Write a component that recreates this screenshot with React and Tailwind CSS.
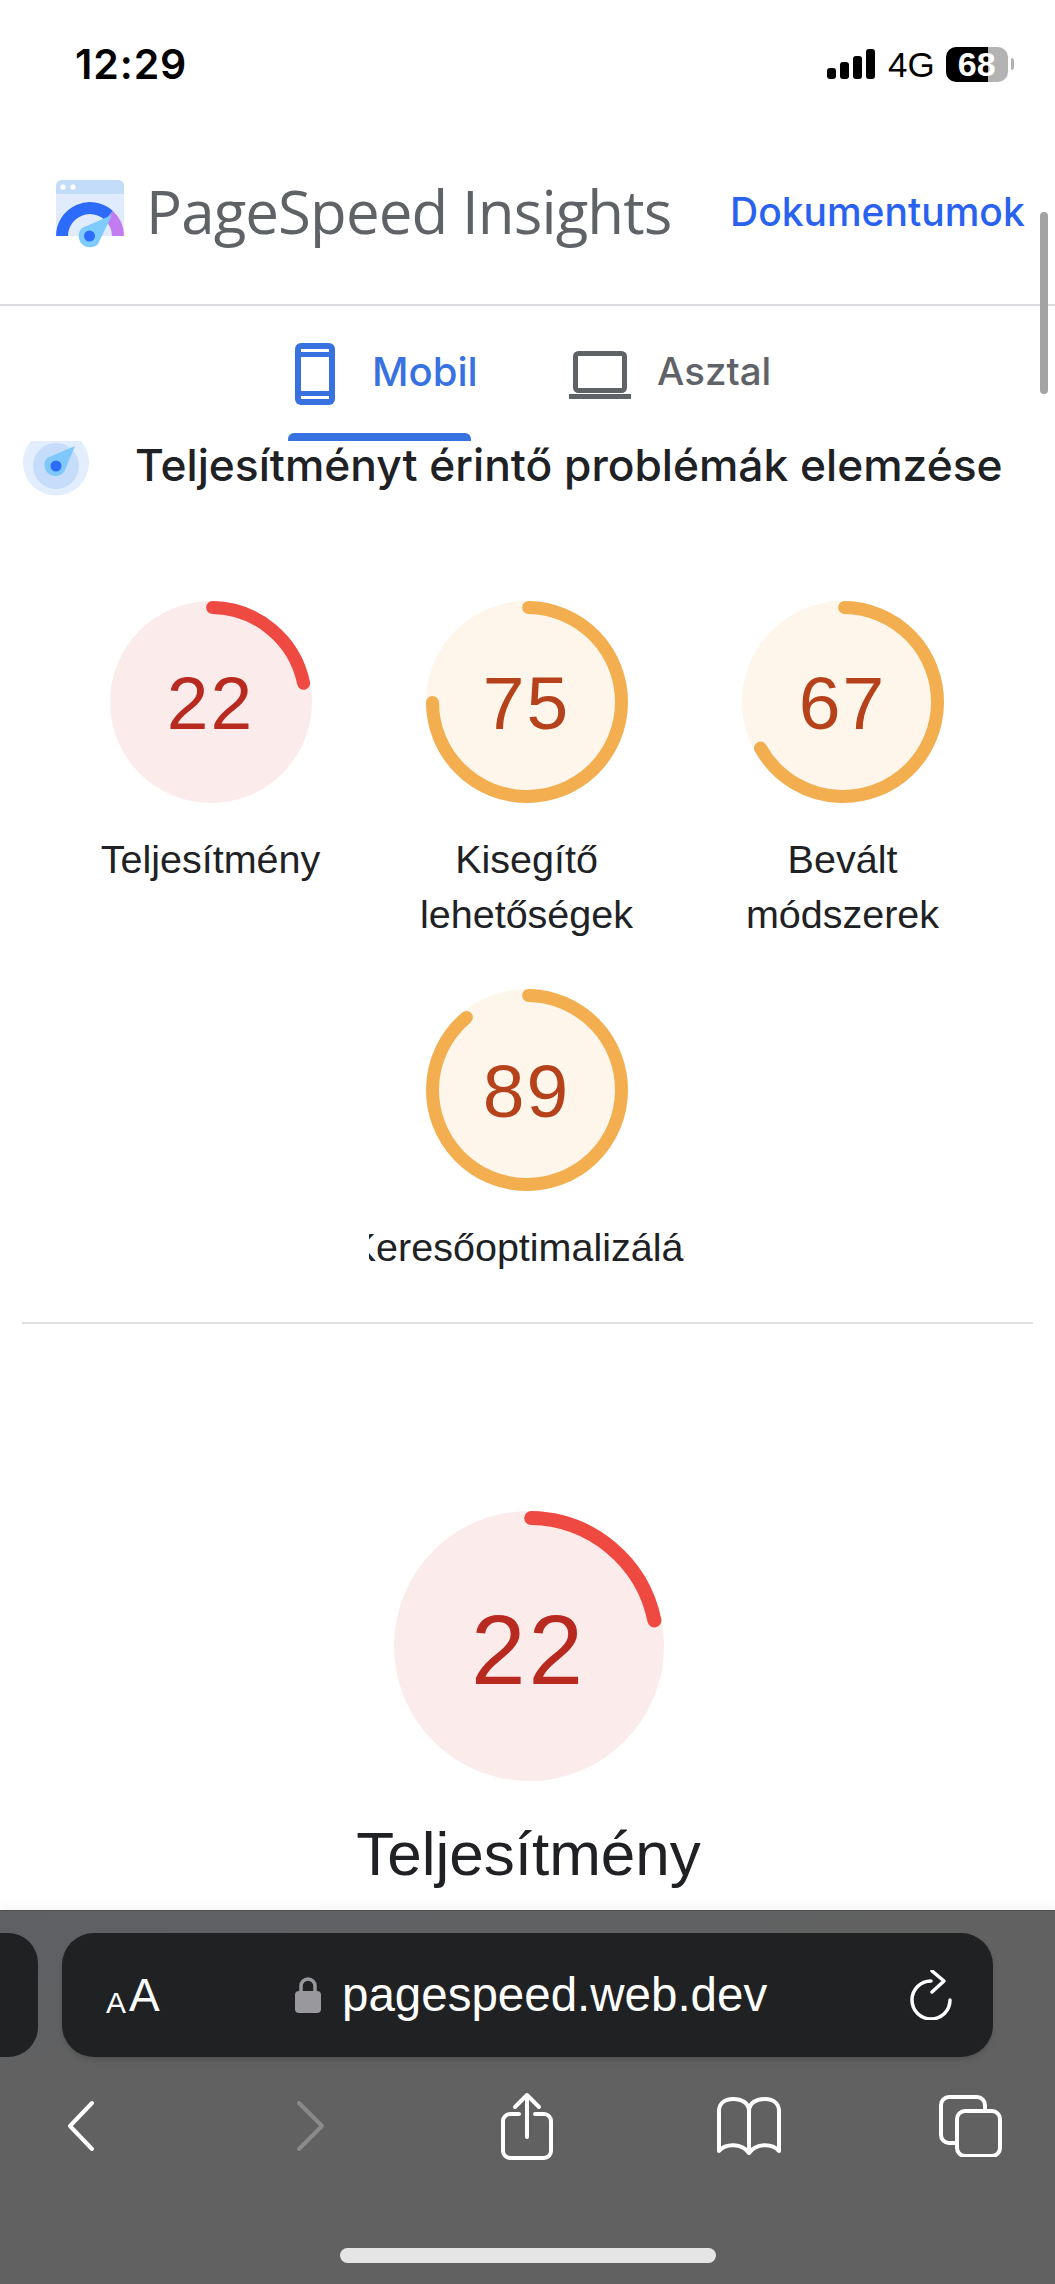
import React from "react";

const sans = "font-['Liberation_Sans',Arial,sans-serif]";

function Gauge({ score, size = 202, stroke = 13, textClass = "text-[75px] tracking-[2px] pt-[3px]" }) {
  const low = score < 50;
  const r = (size - stroke) / 2;
  const circ = 2 * Math.PI * r;
  const dash = ((score - 0.5) / 100) * circ;
  return (
    <div className="relative shrink-0" style={{ width: size, height: size }}>
      <svg width={size} height={size} className="block">
        <circle
          cx={size / 2}
          cy={size / 2}
          r={size / 2}
          fill={low ? "#fbebeb" : "#fef6ea"}
        />
        <circle
          cx={size / 2}
          cy={size / 2}
          r={r}
          fill="none"
          stroke={low ? "#ef4a42" : "#f2ae4f"}
          strokeWidth={stroke}
          strokeLinecap="round"
          strokeDasharray={`${dash} ${circ}`}
          transform={`rotate(-89 ${size / 2} ${size / 2})`}
        />
      </svg>
      <div
        className={`absolute inset-0 flex items-center justify-center ${sans} ${textClass} ${
          low ? "text-[#b82a1f]" : "text-[#b5421b]"
        }`}
      >
        {score}
      </div>
    </div>
  );
}

function ScoreCard({ score, children }) {
  return (
    <div className="w-[316px] flex flex-col items-center">
      <Gauge score={score} />
      <div
        className={`mt-[29px] mb-[1px] w-[316px] flex justify-center overflow-hidden text-center text-[39.500px] leading-[55px] text-[#202124] ${sans}`}
      >
        <span className="shrink-0">{children}</span>
      </div>
    </div>
  );
}

function Logo() {
  return (
    <svg width="68" height="68" viewBox="0 0 68 68" className="block shrink-0 mt-[6px]">
      <path d="M0 56V6a6 6 0 0 1 6-6h56a6 6 0 0 1 6 6v50z" fill="#e0ecfd" />
      <path d="M0 14V6a6 6 0 0 1 6-6h56a6 6 0 0 1 6 6v8z" fill="#c3dcfa" />
      <circle cx="7" cy="7" r="2.6" fill="#fff" />
      <circle cx="17" cy="7" r="2.6" fill="#fff" />
      <path d="M0 56a34 34 0 0 1 57-25l-8 9a22 22 0 0 0-37 16z" fill="#2d6bfb" />
      <path d="M57 31a34 34 0 0 1 11 25H56a22 22 0 0 0-7-16z" fill="#c37bf0" />
      <path d="M26 48L56 35L42 64A11 11 0 0 1 26 48z" fill="#7dcbff" />
      <circle cx="33.500" cy="56" r="5.500" fill="#2d6bfb" />
    </svg>
  );
}

function AuditIcon() {
  return (
    <svg width="68" height="59" viewBox="0 0 68 59" className="block shrink-0">
      <path d="M9 0a33 33 0 1 0 50 0z" fill="#e2edfd" />
      <circle cx="34" cy="25" r="23" fill="#c5dcfb" />
      <path d="M25 17L53 5L42 31A11 11 0 0 1 25 17z" fill="#7fc8fb" />
      <circle cx="34" cy="25" r="5.500" fill="#2d6bfb" />
    </svg>
  );
}

function StatusBar() {
  return (
    <div className="h-[128px] shrink-0 flex items-center pl-[75px] text-black">
      <span className="w-[110px] whitespace-nowrap font-['Inter',sans-serif] font-semibold text-[41px] tracking-[0.9px] leading-none">
        12:29
      </span>
      <div className="ml-[642px] flex items-center">
        <svg width="48" height="32" viewBox="0 0 48 32" className="block">
          <rect x="0" y="20" width="9" height="11" rx="3" />
          <rect x="13" y="14" width="9" height="17" rx="3" />
          <rect x="26" y="8" width="9" height="23" rx="3" />
          <rect x="39" y="1" width="9" height="30" rx="3" />
        </svg>
        <span className={`ml-[13px] text-[35px] leading-none ${sans}`}>4G</span>
        <div
          className={`ml-[11px] w-[62px] h-[35px] rounded-[10px] flex items-center justify-center bg-[linear-gradient(90deg,#000_68%,#b3b3b3_68%)] text-white font-bold text-[34px] leading-none ${sans}`}
        >
          68
        </div>
        <div className="ml-[3px] w-[3px] h-[12px] rounded-r-full bg-[#b3b3b3]" />
      </div>
    </div>
  );
}

function Toolbar() {
  return (
    <div className="mt-auto h-[374px] shrink-0 pt-[22px] bg-[linear-gradient(170deg,#5e6064,#616161_35%,#616161)] border-t border-[#4f4f4f] shadow-[0_-6px_8px_rgba(0,0,0,0.03)]">
      <div className="flex h-[124px]">
        <div className="w-[38px] bg-[#202122] rounded-r-[30px]" />
        <div className="ml-[24px] w-[931px] bg-[#202123] rounded-[32px] flex items-center pl-[44px] text-white shadow-md">
          <div className={`flex items-end w-[54px] ${sans} leading-none`}>
            <span className="text-[30px]">A</span>
            <span className="text-[46px] ml-[3px]">A</span>
          </div>
          <svg width="26" height="36" viewBox="0 0 26 36" className="ml-[135px] block">
            <path d="M6 16V9a7 7 0 0 1 14 0v7" fill="none" stroke="#98989d" strokeWidth="3.500" />
            <rect x="0" y="14" width="26" height="22" rx="4" fill="#98989d" />
          </svg>
          <span className={`ml-[21px] text-[47.500px] leading-none ${sans}`}>pagespeed.web.dev</span>
          <svg width="42" height="50" viewBox="0 0 42 50" className="ml-[143px] block" fill="none" stroke="#fff" strokeWidth="3.500" strokeLinecap="round" strokeLinejoin="round">
            <path d="M21 11A19 19 0 1 0 40 30" />
            <path d="M22 1L34 11L22 22" />
          </svg>
        </div>
      </div>
      <div className="mt-[35px] h-[67px] flex items-center pl-[67px]">
        <svg width="28" height="52" viewBox="0 0 28 52" fill="none" stroke="#fff" strokeWidth="4" strokeLinecap="round" strokeLinejoin="round" className="block">
          <path d="M25 3L3 26L25 49" />
        </svg>
        <svg width="30" height="52" viewBox="0 0 30 52" fill="none" stroke="#8a8a8a" strokeWidth="4" strokeLinecap="round" strokeLinejoin="round" className="block ml-[200px]">
          <path d="M4 3L27 26L4 49" />
        </svg>
        <svg width="52" height="68" viewBox="0 0 52 68" fill="none" stroke="#fff" strokeWidth="4" strokeLinecap="round" strokeLinejoin="round" className="block ml-[176px]">
          <path d="M18 22H9a7 7 0 0 0-7 7v30a7 7 0 0 0 7 7h34a7 7 0 0 0 7-7V29a7 7 0 0 0-7-7h-9" />
          <path d="M26 45V3M14 15L26 3L38 15" />
        </svg>
        <svg width="66" height="58" viewBox="0 0 66 58" fill="none" stroke="#fff" strokeWidth="4" strokeLinejoin="round" className="block ml-[163px]">
          <path d="M33 14C33 6 26 2 17 2C8 2 3 7 3 14V54C10 46 26 46 33 56C40 46 56 46 63 54V14C63 7 58 2 49 2C40 2 33 6 33 14ZM33 14V56" />
        </svg>
        <svg width="63" height="62" viewBox="0 0 63 62" fill="none" stroke="#fff" strokeWidth="4" className="block ml-[157px]">
          <path d="M16 48H10a8 8 0 0 1-8-8V10a8 8 0 0 1 8-8h28a8 8 0 0 1 8 8v6" />
          <rect x="18" y="16" width="43" height="45" rx="8" />
        </svg>
      </div>
      <div className="mt-[89px] ml-[340px] w-[376px] h-[15px] rounded-full bg-[#e5e5e5]" />
    </div>
  );
}

export default function App() {
  return (
    <div className="relative w-[1055px] h-[2284px] overflow-hidden bg-white flex flex-col">
      <StatusBar />

      {/* fejléc */}
      <div className="h-[178px] shrink-0 flex items-center pb-[10px] pl-[56px] border-b-2 border-[#dadce0]">
        <Logo />
        <span className="ml-[22px] w-[526px] whitespace-nowrap font-['Open_Sans',sans-serif] text-[60px] leading-none text-[#5f6368] tracking-[-0.9px]">
          PageSpeed Insights
        </span>
        <span className="ml-[58px] font-['Inter',sans-serif] font-medium text-[39px] leading-none text-[#2a62f0]">
          Dokumentumok
        </span>
      </div>

      {/* tabok */}
      <div className="h-[135px] shrink-0 flex pl-[288px]">
        <div className="w-[183px] flex flex-col justify-between">
          <div className="mt-[37px] pl-[7px] flex items-center text-[#3871e0]">
            <svg width="40" height="62" viewBox="0 0 40 62" className="block shrink-0">
              <rect width="40" height="62" rx="6" fill="#3871e0" />
              <rect x="6" y="6" width="28" height="3" fill="#fff" />
              <rect x="6" y="14" width="28" height="34" fill="#fff" />
              <rect x="6" y="53" width="28" height="3" fill="#fff" />
            </svg>
            <span className="ml-[37px] mb-[5px] font-['Inter',sans-serif] font-medium text-[40px] leading-none">
              Mobil
            </span>
          </div>
          <div className="h-[8px] rounded-t-[6px] bg-[#3871e0]" />
        </div>
        <div className="ml-[98px] mt-[45px] h-[48px] flex items-center text-[#5f6368]">
          <svg width="62" height="48" viewBox="0 0 62 48" className="block shrink-0">
            <rect x="6.500" y="2.500" width="49" height="37" rx="3" fill="none" stroke="#5f6368" strokeWidth="5" />
            <rect x="0" y="43" width="62" height="5" fill="#5f6368" />
          </svg>
          <span className="ml-[26px] mb-[7px] font-['Inter',sans-serif] font-medium text-[38.500px] leading-none">
            Asztal
          </span>
        </div>
      </div>

      {/* cím */}
      <div className="h-[59px] shrink-0 flex pl-[22px]">
        <AuditIcon />
        <span className="ml-[45px] font-['Inter',sans-serif] font-medium text-[44.300px] leading-[48px] text-[#202124] whitespace-nowrap">
          Teljesítményt érintő problémák elemzése
        </span>
      </div>

      {/* pontszámok */}
      <div className="mt-[101px] pl-[52px] pr-[54px] flex flex-wrap justify-center gap-y-[46px]">
        <ScoreCard score={22}>Teljesítmény</ScoreCard>
        <ScoreCard score={75}>
          Kisegítő
          <br />
          lehetőségek
        </ScoreCard>
        <ScoreCard score={67}>
          Bevált
          <br />
          módszerek
        </ScoreCard>
        <ScoreCard score={89}>Keresőoptimalizálás</ScoreCard>
      </div>

      <div className="mt-[46px] mx-[22px] h-[2px] shrink-0 bg-[#e0e0e0]" />

      <div className="mt-[187px] pl-[2px] flex flex-col items-center">
        <Gauge score={22} size={270} stroke={14} textClass="text-[98px] tracking-[3px] pt-[8px]" />
        <div className={`mt-[35px] text-[62px] leading-[75px] text-[#202124] ${sans}`}>
          Teljesítmény
        </div>
      </div>

      <Toolbar />

      {/* görgetősáv */}
      <div className="absolute left-[1040px] top-[212px] w-[8px] h-[182px] rounded-full bg-[#a3a3a3]" />
    </div>
  );
}
